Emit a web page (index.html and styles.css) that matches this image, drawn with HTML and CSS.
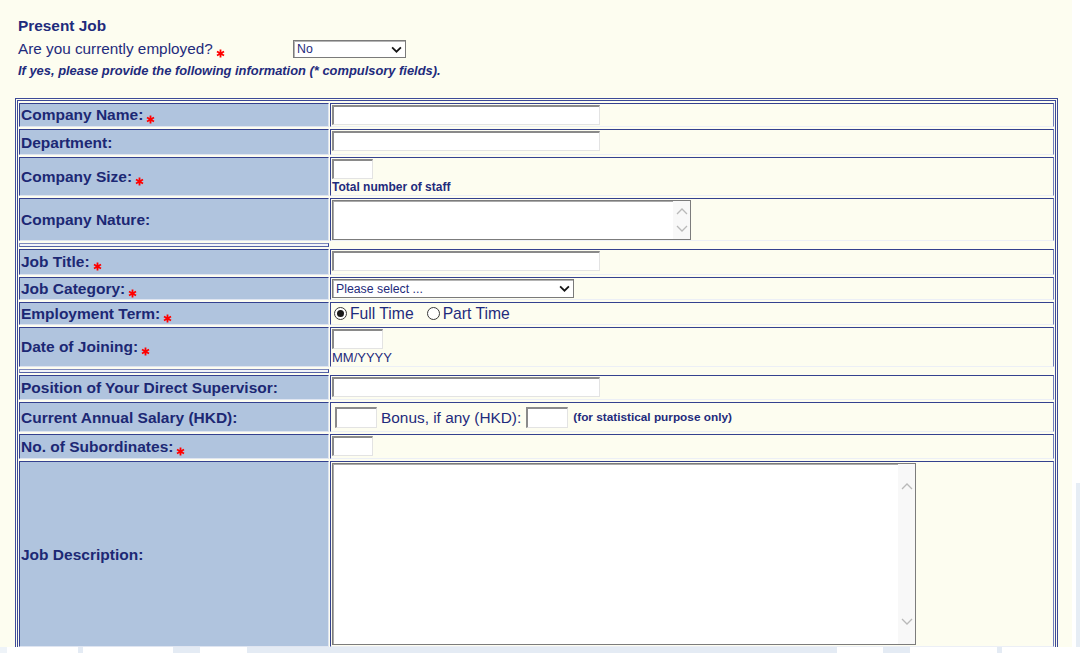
FILE: index.html
```html
<!DOCTYPE html>
<html>
<head>
<meta charset="utf-8">
<title>Present Job</title>
<link rel="stylesheet" href="styles.css">
</head>
<body>
<div class="page">
  <div class="intro">
    <div class="title">Present Job</div>
    <div class="employed">
      <span class="q">Are you currently employed?<svg class="req" viewBox="0 0 10 10"><path d="M5 0.5V9.5M1.1 2.75L8.9 7.25M1.1 7.25L8.9 2.75"/></svg></span>
      <div class="select sel-no"><span>No</span><svg class="chev" viewBox="0 0 10 6"><path d="M1 1L5 5L9 1"/></svg></div>
    </div>
    <div class="note">If yes, please provide the following information (* compulsory fields).</div>
  </div>

  <table class="form">
    <tr class="h24">
      <th>Company Name:<svg class="req" viewBox="0 0 10 10"><path d="M5 0.5V9.5M1.1 2.75L8.9 7.25M1.1 7.25L8.9 2.75"/></svg></th>
      <td><input class="txt" type="text"></td>
    </tr>
    <tr class="h26">
      <th>Department:</th>
      <td><input class="txt" type="text"></td>
    </tr>
    <tr class="h39">
      <th>Company Size:<svg class="req" viewBox="0 0 10 10"><path d="M5 0.5V9.5M1.1 2.75L8.9 7.25M1.1 7.25L8.9 2.75"/></svg></th>
      <td><input class="txt w41" type="text"><div class="hint">Total number of staff</div></td>
    </tr>
    <tr class="h43">
      <th>Company Nature:</th>
      <td class="tacell">
        <div class="ta nature"><textarea></textarea><div class="sb"><svg class="arr" viewBox="0 0 12 7"><path d="M1 6L6 1L11 6"/></svg><svg class="arr" viewBox="0 0 12 7"><path d="M1 1L6 6L11 1"/></svg></div></div>
      </td>
    </tr>
    <tr class="sep"><th class="sepcell"></th><td class="blank"></td></tr>
    <tr class="h26">
      <th>Job Title:<svg class="req" viewBox="0 0 10 10"><path d="M5 0.5V9.5M1.1 2.75L8.9 7.25M1.1 7.25L8.9 2.75"/></svg></th>
      <td><input class="txt" type="text"></td>
    </tr>
    <tr class="h23">
      <th>Job Category:<svg class="req" viewBox="0 0 10 10"><path d="M5 0.5V9.5M1.1 2.75L8.9 7.25M1.1 7.25L8.9 2.75"/></svg></th>
      <td><div class="select sel-cat"><span>Please select ...</span><svg class="chev" viewBox="0 0 10 6"><path d="M1 1L5 5L9 1"/></svg></div></td>
    </tr>
    <tr class="h23">
      <th>Employment Term:<svg class="req" viewBox="0 0 10 10"><path d="M5 0.5V9.5M1.1 2.75L8.9 7.25M1.1 7.25L8.9 2.75"/></svg></th>
      <td class="mid">
        <div class="opts">
          <span class="opt"><span class="radio on"></span>Full Time</span>
          <span class="opt"><span class="radio"></span>Part Time</span>
        </div>
      </td>
    </tr>
    <tr class="h40">
      <th>Date of Joining:<svg class="req" viewBox="0 0 10 10"><path d="M5 0.5V9.5M1.1 2.75L8.9 7.25M1.1 7.25L8.9 2.75"/></svg></th>
      <td><input class="txt w51" type="text"><div class="fmt">MM/YYYY</div></td>
    </tr>
    <tr class="sep"><th class="sepcell"></th><td class="blank"></td></tr>
    <tr class="h25">
      <th>Position of Your Direct Supervisor:</th>
      <td><input class="txt" type="text"></td>
    </tr>
    <tr class="h30">
      <th>Current Annual Salary (HKD):</th>
      <td class="mid">
        <div class="salary">
          <input class="txt w42" type="text">
          <span class="bonus">Bonus, if any (HKD):</span>
          <input class="txt w42" type="text">
          <span class="stat">(for statistical purpose only)</span>
        </div>
      </td>
    </tr>
    <tr class="h25">
      <th>No. of Subordinates:<svg class="req" viewBox="0 0 10 10"><path d="M5 0.5V9.5M1.1 2.75L8.9 7.25M1.1 7.25L8.9 2.75"/></svg></th>
      <td><input class="txt w41" type="text"></td>
    </tr>
    <tr class="h186">
      <th>Job Description:</th>
      <td class="tacell">
        <div class="ta jobdesc"><textarea></textarea><div class="sb"><svg class="arr" viewBox="0 0 12 7"><path d="M1 6L6 1L11 6"/></svg><svg class="arr" viewBox="0 0 12 7"><path d="M1 1L6 6L11 1"/></svg></div></div>
      </td>
    </tr>
  </table>
</div>
</body>
</html>
```
FILE: styles.css
```css
* { box-sizing: border-box; }

html, body { margin: 0; padding: 0; }

body {
  width: 1080px;
  height: 653px;
  overflow: hidden;
  background-color: #ffffff;
  background-image:
    linear-gradient(to right, #eef3f8 0 7px, #ffffff 7px 78px, #e4ebf4 78px 83px, #ffffff 83px 173px, #e4ebf4 173px 200px, #ffffff 200px 247px, #e4ebf4 247px 837px, #ffffff 837px 883px, #e4ebf4 883px 910px, #ffffff 910px 997px, #e4ebf4 997px 1002px, #ffffff 1002px),
    linear-gradient(to right, #ffffff 0 2px, #e6edf5 2px);
  background-repeat: no-repeat;
  background-size: 100% 6px, 6px 170px;
  background-position: left bottom, right bottom;
  font-family: "Liberation Sans", Arial, sans-serif;
  color: #1f2b7c;
}

.page {
  width: 1072px;
  height: 647px;
  overflow: hidden;
  background: #fdfdf0;
  padding: 17px 0 0 15px;
}

.intro { padding-left: 3px; }

.title {
  font-size: 15.4px;
  line-height: 17px;
  font-weight: bold;
}

.employed {
  display: flex;
  align-items: flex-start;
  margin-top: 6px;
  height: 18px;
}

.q {
  width: 275px;
  font-size: 15.3px;
  line-height: 17px;
}

.note {
  margin-top: 5px;
  font-size: 12.9px;
  line-height: 15px;
  font-weight: bold;
  font-style: italic;
}

.req {
  width: 9px;
  height: 9px;
  margin-left: 3px;
  vertical-align: -4px;
  fill: none;
  stroke: #ff0000;
  stroke-width: 2;
}

/* fake select */
.select {
  display: flex;
  align-items: center;
  justify-content: space-between;
  background: #ffffff;
  border: 1px solid #7a7a7a;
  box-shadow: inset 1px 1px 0 #b4b4b4;
  font-size: 12.3px;
  color: #1f2b7c;
  padding: 0 3px 0 3px;
}
.sel-no { width: 113px; height: 18px; }
.sel-cat { width: 242px; height: 19px; }

.chev {
  width: 11px;
  height: 7px;
  fill: none;
  stroke: #151515;
  stroke-width: 1.6;
}

/* table */
.form {
  margin-top: 20px;
  width: 1043px;
  table-layout: fixed;
  border: 3px double #3d4a98;
  border-spacing: 1px 2px;
}

.form th {
  width: 310px;
  background: #b0c4de;
  text-align: left;
  font-weight: bold;
  font-size: 15.5px;
  line-height: 17px;
  color: #1c2874;
  padding: 0 1px;
  vertical-align: middle;
  border: 1px solid;
  border-color: #34418f #dfe5f1 #dfe5f1 #34418f;
}

.form td {
  padding: 1px;
  vertical-align: top;
  border: 1px solid;
  border-color: #34418f #6f7dbb #eceff6 #34418f;
}

.form td.mid { vertical-align: middle; }
.form td.tacell { padding-bottom: 0; }

.form tr.h23 { height: 23px; }
.form tr.h24 { height: 24px; }
.form tr.h25 { height: 25px; }
.form tr.h26 { height: 26px; }
.form tr.h30 { height: 30px; }
.form tr.h39 { height: 39px; }
.form tr.h40 { height: 40px; }
.form tr.h43 { height: 43px; }
.form tr.h186 { height: 186px; }
.form tr.sep { height: 4px; }

.form th.sepcell {
  padding: 0;
  height: 4px;
  background: #f2f4f8;
  border-color: #7d88bc #3d4a98 #5563a6 #7d88bc;
}

.form td.blank {
  border: 0;
  padding: 0;
}

/* inputs */
.txt {
  display: block;
  width: 268px;
  height: 20px;
  margin: 0;
  padding: 0 2px;
  background: #ffffff;
  border-style: solid;
  border-width: 2px 1px 1px 2px;
  border-color: #8a8a8a #e3e3e3 #e3e3e3 #8a8a8a;
  font: 13px "Liberation Sans", Arial, sans-serif;
}
.w41 { width: 41px; }
.w42 { width: 42px; height: 21px; }
.w51 { width: 51px; }

.hint {
  margin-top: 1px;
  font-size: 12px;
  line-height: 14px;
  font-weight: bold;
}

.fmt {
  margin-top: 2px;
  font-size: 13px;
  line-height: 14px;
}

/* textarea with scrollbar look */
.ta {
  display: flex;
  background: #ffffff;
  border: 1px solid #7c7c7c;
  box-shadow: inset 1px 1px 0 #a9a9a9;
}
.ta textarea {
  flex: 1;
  border: 0;
  margin: 1px 0 0 1px;
  padding: 2px;
  resize: none;
  outline: none;
  background: #ffffff;
  font: 13px "Liberation Sans", Arial, sans-serif;
}
.sb {
  width: 17px;
  background: #f8f8f8;
  display: flex;
  flex-direction: column;
  justify-content: space-between;
  align-items: center;
}
.nature { width: 359px; height: 40px; }
.nature .sb { padding: 7px 0; }
.jobdesc { width: 584px; height: 182px; }
.jobdesc .sb { padding: 19px 0; }

.arr {
  width: 12px;
  height: 7px;
  fill: none;
  stroke: #b9b9b9;
  stroke-width: 1.3;
}

/* radios */
.opts {
  display: flex;
  align-items: center;
  gap: 13px;
  padding-left: 2px;
  font-size: 15.7px;
  line-height: 17px;
}
.opt {
  display: inline-flex;
  align-items: center;
}
.radio {
  width: 13px;
  height: 13px;
  margin-right: 3px;
  border: 1px solid #3a3a3a;
  border-radius: 50%;
  background: #ffffff;
  display: inline-flex;
  align-items: center;
  justify-content: center;
}
.radio.on::after {
  content: "";
  width: 7px;
  height: 7px;
  border-radius: 50%;
  background: #1a1a1a;
}

/* salary */
.salary {
  display: flex;
  align-items: center;
  padding-left: 3px;
}
.bonus {
  margin: 0 5px 0 4px;
  font-size: 15.4px;
  line-height: 17px;
}
.stat {
  margin-left: 5px;
  font-size: 11.8px;
  line-height: 14px;
  font-weight: bold;
}
```
